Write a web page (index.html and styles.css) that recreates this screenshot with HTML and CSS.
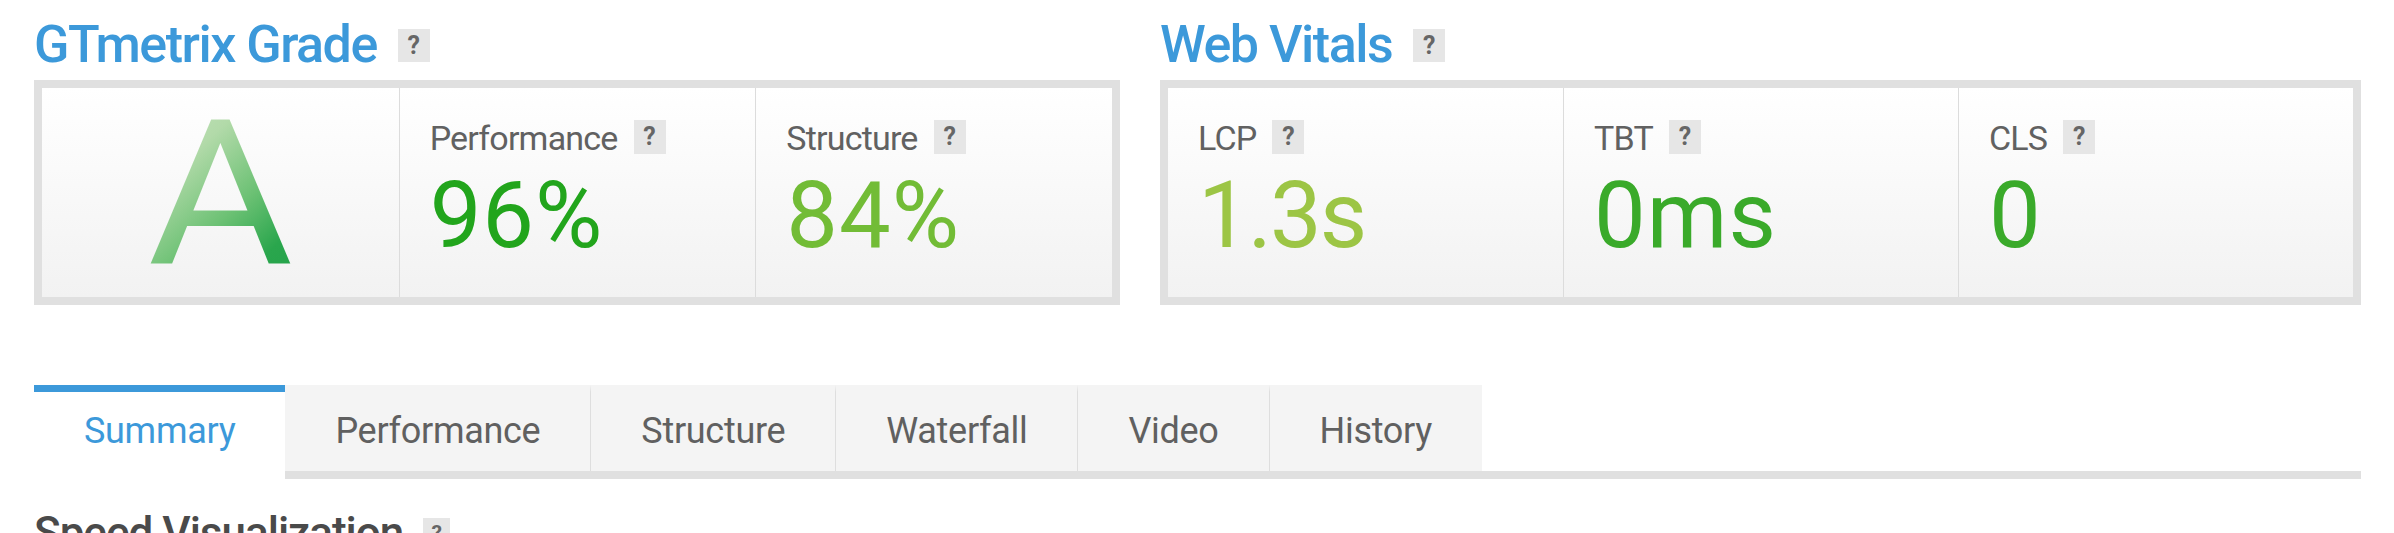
FILE: index.html
```html
<!DOCTYPE html>
<html lang="en">
<head>
<meta charset="utf-8">
<title>GTmetrix Report</title>
<link rel="stylesheet" href="styles.css">
</head>
<body>
<div class="page">
  <div class="summary-row">
    <section class="panel panel-grade">
      <h2 class="title">GTmetrix Grade<span class="help">?</span></h2>
      <div class="board">
        <div class="cell grade"><span class="grade-letter">A</span></div>
        <div class="cell metric">
          <div class="label">Performance<span class="help help-sm">?</span></div>
          <div class="value c-perf">96%</div>
        </div>
        <div class="cell metric">
          <div class="label">Structure<span class="help help-sm">?</span></div>
          <div class="value c-struct">84%</div>
        </div>
      </div>
    </section>
    <section class="panel panel-vitals">
      <h2 class="title">Web Vitals<span class="help">?</span></h2>
      <div class="board">
        <div class="cell metric">
          <div class="label">LCP<span class="help help-sm">?</span></div>
          <div class="value c-lcp">1.3s</div>
        </div>
        <div class="cell metric">
          <div class="label">TBT<span class="help help-sm">?</span></div>
          <div class="value c-tbt">0ms</div>
        </div>
        <div class="cell metric">
          <div class="label">CLS<span class="help help-sm">?</span></div>
          <div class="value c-cls">0</div>
        </div>
      </div>
    </section>
  </div>
  <nav class="tabs">
    <a class="tab active">Summary</a>
    <a class="tab">Performance</a>
    <a class="tab">Structure</a>
    <a class="tab">Waterfall</a>
    <a class="tab">Video</a>
    <a class="tab">History</a>
  </nav>
  <h3 class="subtitle">Speed Visualization<span class="help help-xs">?</span></h3>
</div>
</body>
</html>
```
FILE: styles.css
```css
html, body {
  margin: 0;
  padding: 0;
  overflow: hidden;
  background: #ffffff;
}

body {
  font-family: Roboto, "Liberation Sans", Arial, sans-serif;
  color: #606060;
}

.page {
  padding: 15px 33px 0 34px;
}

.summary-row {
  display: flex;
  gap: 40px;
}

.panel-grade {
  flex: 0 0 1086px;
}

.panel-vitals {
  flex: 1 1 auto;
  min-width: 0;
}

.title {
  margin: 0 0 5px;
  font-size: 52px;
  font-weight: 500;
  line-height: 60px;
  letter-spacing: -1.5px;
  color: #3c99da;
  white-space: nowrap;
}

.subtitle {
  margin: 28px 0 0;
  font-size: 44px;
  font-weight: 500;
  line-height: 52px;
  letter-spacing: -1px;
  color: #4a4a4a;
  white-space: nowrap;
}

.help {
  display: inline-block;
  width: 32px;
  height: 33px;
  line-height: 33px;
  margin-left: 21px;
  background: #e6e6e6;
  color: #666666;
  font-size: 25px;
  font-weight: 700;
  letter-spacing: 0;
  text-align: center;
  vertical-align: baseline;
  overflow: hidden;
}

.help-sm {
  height: 34px;
  line-height: 34px;
  margin-left: 16px;
  vertical-align: -4px;
}

.help-xs {
  width: 27px;
  height: 30px;
  line-height: 30px;
  margin-left: 20px;
  font-size: 21px;
}

.board {
  display: grid;
  grid-template-columns: repeat(3, 1fr);
  height: 209px;
  border: 8px solid #e0e0e0;
}

.cell {
  background: linear-gradient(#ffffff, #f2f2f2);
  min-width: 0;
}

.cell + .cell {
  border-left: 1px solid #dcdcdc;
}

.grade {
  display: flex;
  align-items: center;
  justify-content: center;
  padding-top: 6px;
}

.grade-letter {
  display: inline-block;
  font-size: 203px;
  line-height: 203px;
  font-weight: 400;
  background: linear-gradient(135deg, #c9e6c2 0%, #b2daa9 30%, #6cc174 58%, #2aa64d 80%, #22a249 100%);
  -webkit-background-clip: text;
  background-clip: text;
  color: transparent;
  transform: scaleX(1.1);
}

.metric {
  padding: 30px 0 0 30px;
}

.label {
  font-size: 34px;
  line-height: 40px;
  letter-spacing: -0.8px;
  color: #616161;
  white-space: nowrap;
}

.value {
  margin-top: 12px;
  font-size: 92px;
  line-height: 92px;
  font-weight: 400;
  letter-spacing: 1px;
  white-space: nowrap;
}

.c-perf { color: #22a51c; }
.c-struct { color: #72bc36; }
.c-lcp { color: #9cc545; letter-spacing: -2px; }
.c-tbt { color: #3aaa2a; }
.c-cls { color: #3aaa2a; }

.tabs {
  display: flex;
  margin-top: 80px;
  border-bottom: 8px solid #e0e0e0;
}

.tab {
  display: block;
  height: 79px;
  padding: 0 50px;
  line-height: 79px;
  border-top: 7px solid transparent;
  background: #f4f4f4;
  color: #606060;
  font-size: 36px;
  letter-spacing: -0.3px;
  white-space: nowrap;
}

.tab.active {
  background: #ffffff;
  border-top-color: #3c99da;
  color: #3c99da;
  margin-bottom: -8px;
  padding-bottom: 8px;
}

.tab:not(.active) + .tab {
  border-left: 1px solid #dedede;
}
```
